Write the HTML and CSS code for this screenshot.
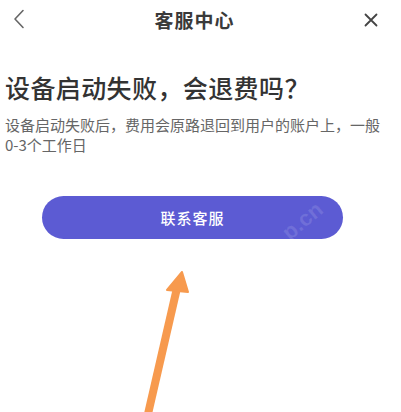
FILE: index.html
```html
<!DOCTYPE html>
<html lang="zh-CN">
<head>
<meta charset="utf-8">
<title>客服中心</title>
<link rel="stylesheet" href="styles.css">
</head>
<body>
<div class="page">
  <header class="topbar">
    <button class="icon-btn back" aria-label="返回">
      <svg width="12" height="20" viewBox="0 0 12 20"><path d="M10 1.5 L2 10 L10 18.5" fill="none" stroke="#666" stroke-width="1.6" stroke-linecap="round" stroke-linejoin="round"/></svg>
    </button>
    <h1 class="title">客服中心</h1>
    <button class="icon-btn close" aria-label="关闭">
      <svg width="14" height="14" viewBox="0 0 14 14"><path d="M1.5 1.5 L12.5 12.5 M12.5 1.5 L1.5 12.5" fill="none" stroke="#444" stroke-width="1.8" stroke-linecap="round"/></svg>
    </button>
  </header>

  <main class="content">
    <h2 class="question">设备启动失败，会退费吗？</h2>
    <p class="answer">设备启动失败后，费用会原路退回到用户的账户上，一般0-3个工作日</p>
    <div class="actions">
      <button class="contact">联系客服</button>
      <span class="mark">p.cn</span>
    </div>
  </main>

  <svg class="pointer" width="401" height="412" viewBox="0 0 401 412">
    <line x1="148" y1="414" x2="177" y2="288" stroke="#f79a4e" stroke-width="8" stroke-linecap="butt"/>
    <polygon points="182,272 167,290 188,292" fill="#f79a4e" stroke="#f79a4e" stroke-width="2" stroke-linejoin="round"/>
  </svg>
</div>
</body>
</html>
```

FILE: styles.css
```css
* {
  box-sizing: border-box;
}

html, body {
  margin: 0;
  padding: 0;
  background: #fff;
}

body {
  font-family: "Noto Sans CJK SC", "Noto Sans", sans-serif;
  color: #333;
}

.page {
  position: relative;
  width: 401px;
  height: 412px;
  overflow: hidden;
}

.topbar {
  display: flex;
  align-items: center;
  justify-content: space-between;
  height: 40px;
  padding: 0 22px 0 12px;
}

.icon-btn {
  display: flex;
  align-items: center;
  justify-content: center;
  padding: 0;
  border: 0;
  background: none;
}

.back {
  width: 14px;
  height: 20px;
  margin-top: -2px;
}

.close {
  width: 16px;
  height: 16px;
}

.title {
  margin: 0;
  font-size: 19px;
  font-weight: 700;
  color: #3a3a3a;
  letter-spacing: 1px;
  line-height: 40px;
}

.content {
  padding: 0 5px;
}

.question {
  margin: 29px 0 0;
  font-size: 25px;
  font-weight: 500;
  color: #333;
  line-height: 36px;
  letter-spacing: 0.4px;
}

.answer {
  margin: 10px 0 0;
  font-size: 15px;
  line-height: 20px;
  color: #666;
  padding-right: 16px;
}

.actions {
  position: relative;
  display: flex;
  padding-left: 37px;
  margin-top: 41px;
}

.contact {
  width: 301px;
  height: 43px;
  border: 0;
  border-radius: 22px;
  background: #5c5bd3;
  color: #fff;
  font-family: "Noto Sans CJK SC", sans-serif;
  font-size: 15px;
  font-weight: 500;
  letter-spacing: 1px;
}

.mark {
  position: absolute;
  left: 275px;
  top: 12px;
  font-family: "Liberation Sans", sans-serif;
  font-size: 22px;
  font-weight: 700;
  color: rgba(255, 255, 255, 0.12);
  transform: rotate(-40deg);
}

.pointer {
  position: absolute;
  left: 0;
  top: 0;
  pointer-events: none;
}
```
